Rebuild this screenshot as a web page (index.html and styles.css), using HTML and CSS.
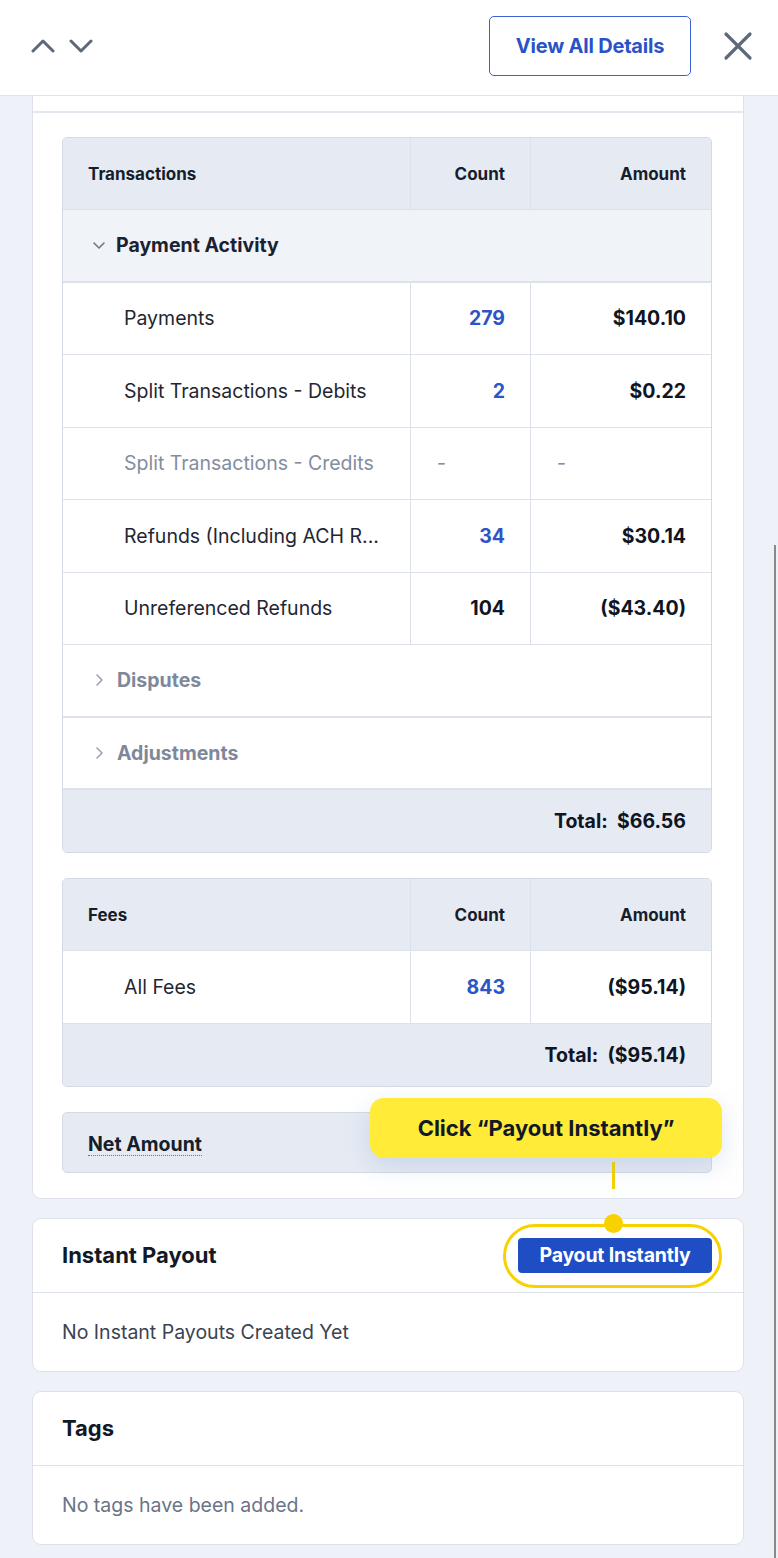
FILE: index.html
```html
<!DOCTYPE html>
<html lang="en">
<head>
  <meta charset="UTF-8">
  <meta name="viewport" content="width=device-width, initial-scale=1.0">
  <title>Payout Details</title>
  <link rel="stylesheet" href="styles.css">
</head>
<body>
  <div class="topbar">
    <div class="pager">
      <svg width="24" height="14" viewBox="0 0 24 14"><polyline points="2,12 12,2 22,12" /></svg>
      <svg width="24" height="14" viewBox="0 0 24 14"><polyline points="2,2 12,12 22,2" /></svg>
    </div>
    <div class="top-actions">
      <button class="btn-outline">View All Details</button>
      <svg class="close" width="30" height="30" viewBox="0 0 30 30"><line x1="3" y1="3" x2="27" y2="27" /><line x1="27" y1="3" x2="3" y2="27" /></svg>
    </div>
  </div>

  <div class="content">
    <div class="card summary">
      <div class="card-tail"></div>
      <div class="card-body">

        <div class="ledger">
          <div class="row head">
            <div class="cell">Transactions</div>
            <div class="cell num">Count</div>
            <div class="cell num">Amount</div>
          </div>
          <div class="group open">
            <svg width="14" height="10" viewBox="0 0 14 10"><polyline points="2,3 7,8 12,3" /></svg>
            Payment Activity
          </div>
          <div class="row">
            <div class="cell label">Payments</div>
            <div class="cell num link">279</div>
            <div class="cell num strong">$140.10</div>
          </div>
          <div class="row">
            <div class="cell label">Split Transactions - Debits</div>
            <div class="cell num link">2</div>
            <div class="cell num strong">$0.22</div>
          </div>
          <div class="row muted">
            <div class="cell label">Split Transactions - Credits</div>
            <div class="cell">-</div>
            <div class="cell">-</div>
          </div>
          <div class="row">
            <div class="cell label">Refunds (Including ACH R...</div>
            <div class="cell num link">34</div>
            <div class="cell num strong">$30.14</div>
          </div>
          <div class="row">
            <div class="cell label">Unreferenced Refunds</div>
            <div class="cell num strong">104</div>
            <div class="cell num strong">($43.40)</div>
          </div>
          <div class="group closed">
            <svg width="10" height="14" viewBox="0 0 10 14"><polyline points="3,2 8,7 3,12" /></svg>
            Disputes
          </div>
          <div class="group closed">
            <svg width="10" height="14" viewBox="0 0 10 14"><polyline points="3,2 8,7 3,12" /></svg>
            Adjustments
          </div>
          <div class="total">Total:&nbsp; $66.56</div>
        </div>

        <div class="ledger">
          <div class="row head">
            <div class="cell">Fees</div>
            <div class="cell num">Count</div>
            <div class="cell num">Amount</div>
          </div>
          <div class="row">
            <div class="cell label">All Fees</div>
            <div class="cell num link">843</div>
            <div class="cell num strong">($95.14)</div>
          </div>
          <div class="total">Total:&nbsp; ($95.14)</div>
        </div>

        <div class="net">
          <span class="net-label">Net Amount</span>
        </div>

      </div>
    </div>

    <div class="card panel">
      <div class="panel-head">
        <h2>Instant Payout</h2>
        <div class="payout-action">
          <div class="hint">Click “Payout Instantly”</div>
          <div class="hint-line"></div>
          <div class="ring"></div>
          <div class="ring-dot"></div>
          <button class="btn-primary">Payout Instantly</button>
        </div>
      </div>
      <div class="panel-body">No Instant Payouts Created Yet</div>
    </div>

    <div class="card panel">
      <div class="panel-head">
        <h2>Tags</h2>
      </div>
      <div class="panel-body light">No tags have been added.</div>
    </div>
  </div>

  <div class="scroll-thumb"></div>
</body>
</html>
```

FILE: styles.css
```css
* {
  box-sizing: border-box;
  margin: 0;
  padding: 0;
}

body {
  font-family: Inter, "Open Sans", sans-serif;
  background-color: #eef2f8;
  color: #111827;
  height: 1558px;
  overflow: hidden;
  position: relative;
}

/* top bar */
.topbar {
  height: 96px;
  background-color: #fff;
  border-bottom: 1px solid #dfe4ec;
  display: flex;
  align-items: center;
  justify-content: space-between;
  padding: 0 25px 0 31px;
  position: relative;
  z-index: 2;
}

.pager {
  display: flex;
  gap: 14px;
  margin-top: -4px;
}

.pager polyline {
  fill: none;
  stroke: #5d6878;
  stroke-width: 3;
  stroke-linecap: round;
  stroke-linejoin: round;
}

.top-actions {
  display: flex;
  align-items: center;
  gap: 32px;
  margin-top: -4px;
}

.btn-outline {
  width: 202px;
  height: 60px;
  border: 1.5px solid #3a62d4;
  border-radius: 5px;
  background: #fff;
  color: #2a52c7;
  font-family: Inter, sans-serif;
  font-size: 20px;
  font-weight: 700;
  letter-spacing: -0.2px;
}

.close line {
  stroke: #5d6878;
  stroke-width: 3.2;
  stroke-linecap: round;
}

/* content */
.content {
  padding: 0 34px 0 32px;
  display: flex;
  flex-direction: column;
  gap: 19px;
}

.card {
  background: #fff;
  border: 1px solid #dde2ea;
  border-radius: 9px;
}

.summary {
  border-top: none;
  border-top-left-radius: 0;
  border-top-right-radius: 0;
}

.card-tail {
  height: 17px;
  border-bottom: 2px solid #e3e7ee;
}

.card-body {
  padding: 24px 31px 25px 29px;
  display: flex;
  flex-direction: column;
  gap: 25px;
}

/* ledger tables */
.ledger {
  border: 1px solid #d3dae4;
  border-radius: 5px;
  overflow: hidden;
  font-size: 19.5px;
}

.row {
  display: grid;
  grid-template-columns: 347px 120px 1fr;
  height: 72.5px;
  border-bottom: 1px solid #dde2ea;
}

.cell {
  display: flex;
  align-items: center;
  padding: 0 25px 0 26px;
}

.cell + .cell {
  border-left: 1px solid #dde2ea;
}

.cell.num {
  justify-content: flex-end;
}

.cell.label {
  padding-left: 61px;
  white-space: nowrap;
  color: #1f2633;
}

.head {
  background-color: #e6ebf3;
  height: 72px;
  font-size: 17px;
  font-weight: 700;
  color: #161d2b;
}

.head .cell:first-child {
  padding-left: 25px;
}

.link {
  color: #2d55c6;
  font-weight: 700;
}

.strong {
  font-weight: 700;
  color: #0f1522;
}

.muted .cell {
  color: #838da0;
}

.group {
  height: 72.5px;
  display: flex;
  align-items: center;
  gap: 10px;
  padding-left: 29px;
  font-weight: 700;
  border-bottom: 2px solid #dde2ea;
}

.group svg polyline {
  fill: none;
  stroke-width: 1.6;
  stroke-linecap: round;
  stroke-linejoin: round;
}

.group.open {
  background-color: #f0f3f8;
  color: #1a2130;
}

.group.open svg polyline {
  stroke: #6d778a;
}

.group.closed {
  color: #7e889a;
  padding-left: 31px;
  gap: 13px;
}

.group.closed svg polyline {
  stroke: #9aa3b3;
}

.total {
  height: 62px;
  background-color: #e6ebf3;
  display: flex;
  align-items: center;
  justify-content: flex-end;
  padding-right: 25px;
  font-weight: 700;
  color: #0f1522;
}

.net {
  height: 61px;
  background-color: #e6ebf3;
  border: 1px solid #d3dae4;
  border-radius: 5px;
  display: flex;
  align-items: center;
  padding-left: 25px;
}

.net-label {
  font-size: 19.5px;
  font-weight: 700;
  color: #161d2b;
  border-bottom: 1.5px dotted #6d778a;
  line-height: 22px;
  margin-top: 4px;
}

/* panels */
.panel-head {
  height: 74px;
  border-bottom: 1px solid #dde2ea;
  display: flex;
  align-items: center;
  justify-content: space-between;
  padding: 0 31px 0 29px;
}

.panel-head h2 {
  font-size: 22px;
  font-weight: 700;
  color: #111827;
}

.panel-body {
  height: 78px;
  display: flex;
  align-items: center;
  padding-left: 29px;
  font-size: 19.5px;
  color: #3b4352;
}

.panel-body.light {
  color: #6b7486;
}

.payout-action {
  position: relative;
}

.btn-primary {
  position: relative;
  width: 194px;
  height: 35px;
  border: none;
  border-radius: 4px;
  background-color: #1f4ec4;
  color: #fff;
  font-family: Inter, sans-serif;
  font-size: 19.5px;
  font-weight: 700;
  letter-spacing: -0.2px;
  z-index: 1;
}

/* walkthrough hint */
.ring {
  position: absolute;
  left: -15px;
  right: -10px;
  top: -14px;
  bottom: -15px;
  border: 3px solid #f7d200;
  border-radius: 32px;
}

.ring-dot {
  position: absolute;
  left: 86px;
  top: -24px;
  width: 19px;
  height: 19px;
  border-radius: 50%;
  background-color: #f7d200;
}

.hint-line {
  position: absolute;
  left: 94px;
  top: -76px;
  width: 3px;
  height: 27px;
  background-color: #f7d200;
}

.hint {
  position: absolute;
  right: -10px;
  top: -140px;
  width: 352px;
  height: 60px;
  background-color: #ffeb38;
  border-radius: 14px;
  box-shadow: 0 8px 24px rgba(120, 150, 200, 0.25);
  display: flex;
  align-items: center;
  justify-content: center;
  font-size: 22px;
  font-weight: 700;
  color: #111827;
  z-index: 3;
}

.scroll-thumb {
  position: absolute;
  left: 774px;
  top: 545px;
  width: 2px;
  height: 1013px;
  background-color: #8a8a8a;
}
```
